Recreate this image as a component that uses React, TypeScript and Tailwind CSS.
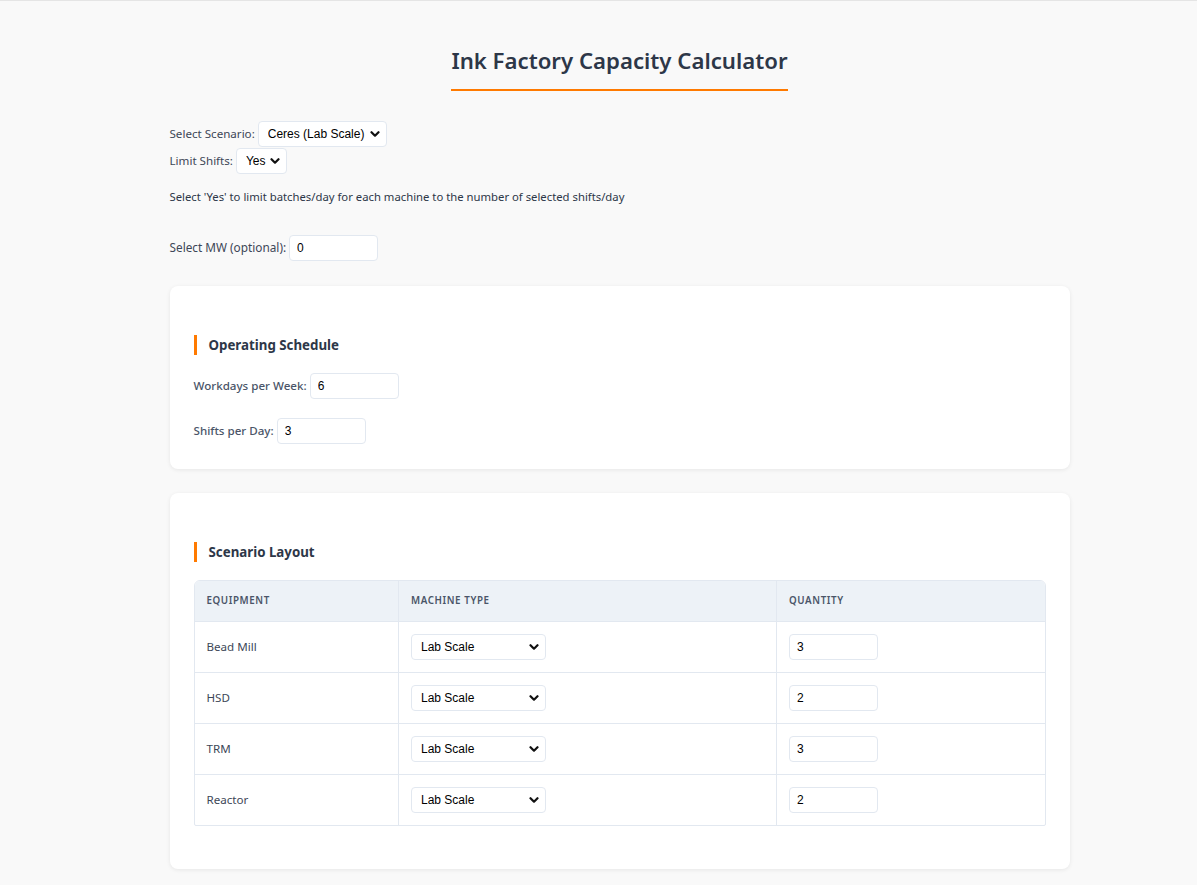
import React from "react";

const Chevron = () => (
  <svg width="10" height="10" viewBox="0 0 10 10" className="pointer-events-none absolute right-[7px] top-1/2 -translate-y-1/2">
    <path d="M1.5 3.2 L5 6.7 L8.5 3.2" fill="none" stroke="#111" strokeWidth="2.2" strokeLinecap="round" strokeLinejoin="round" />
  </svg>
);

function Select({ value, w }: { value: string; w: string }) {
  return (
    <span className={`relative flex ${w}`}>
      <select
        defaultValue={value}
        className="appearance-none w-full h-[26px] rounded-[4px] border border-[#e2e8f0] bg-white pl-[9px] pr-5 text-[12px] text-black font-['Liberation_Sans',Arial,sans-serif]"
      >
        <option>{value}</option>
      </select>
      <Chevron />
    </span>
  );
}

function Input({ value }: { value: string }) {
  return (
    <input
      defaultValue={value}
      className="w-[89px] h-[26px] rounded-[4px] border border-[#e2e8f0] bg-white px-[7px] text-[12px] text-black font-['Liberation_Sans',Arial,sans-serif]"
    />
  );
}

function CardHeading({ children }: { children: React.ReactNode }) {
  return (
    <h2 className="border-l-[3px] border-[#ff7a00] pl-3 text-[13.3px] leading-[20px] font-bold text-[#2d3748]">
      {children}
    </h2>
  );
}

const rows = [
  { name: "Bead Mill", qty: "3" },
  { name: "HSD", qty: "2" },
  { name: "TRM", qty: "3" },
  { name: "Reactor", qty: "2" },
];

export default function App() {
  return (
    <div className="min-h-screen bg-[#f9f9f9] border-t border-[#e5e5e5] font-['Noto_Sans',sans-serif] text-[#4a5568]">
      <div className="w-[900px] mx-auto translate-x-[21px] pt-[44px] pb-10">
        <div className="text-center">
          <h1 className="inline-block border-b-2 border-[#ff7a00] pb-[12px] text-[22.2px] leading-[32px] font-semibold text-[#2d3748]">
            Ink Factory Capacity Calculator
          </h1>
        </div>

        <div className="mt-[30px] flex flex-col gap-[1px] text-[11.6px] text-[#3d4757]">
          <div className="flex items-center gap-[3px]">
            <span>Select Scenario:</span>
            <Select value="Ceres (Lab Scale)" w="w-[129px]" />
          </div>
          <div className="flex items-center gap-[3px]">
            <span>Limit Shifts:</span>
            <Select value="Yes" w="w-[51px]" />
          </div>
        </div>
        <p className="mt-[15px] text-[11.3px] leading-[16px] text-[#2d3748]">
          Select 'Yes' to limit batches/day for each machine to the number of selected shifts/day
        </p>
        <div className="mt-[30px] flex items-center gap-[3px] text-[11.8px] text-[#3d4757]">
          <span>Select MW (optional):</span>
          <Input value="0" />
        </div>

        <div className="mt-[25px] rounded-lg bg-white p-6 pb-[25px] shadow-[0_1px_4px_rgba(0,0,0,0.08)]">
          <div className="mt-[25px]">
            <CardHeading>Operating Schedule</CardHeading>
          </div>
          <div className="mt-[18px] flex flex-col gap-[19px] text-[11.6px] font-medium">
            <div className="flex items-center gap-[3px]">
              <span>Workdays per Week:</span>
              <Input value="6" />
            </div>
            <div className="flex items-center gap-[3px]">
              <span>Shifts per Day:</span>
              <Input value="3" />
            </div>
          </div>
        </div>

        <div className="mt-6 rounded-lg bg-white p-6 pb-[43px] shadow-[0_1px_4px_rgba(0,0,0,0.08)]">
          <div className="mt-[25px]">
            <CardHeading>Scenario Layout</CardHeading>
          </div>
          <div className="mt-[18px] overflow-hidden rounded-t-[6px] rounded-b-[2px] border border-[#e2e8f0]">
            <table className="w-full border-collapse text-left">
              <thead>
                <tr className="bg-[#edf2f7]">
                  <th className="w-[204px] px-3 py-3 text-[9.8px] leading-[16px] font-semibold uppercase tracking-[0.06em] text-[#4a5568] border-r border-[#e2e8f0]">Equipment</th>
                  <th className="w-[378px] px-3 py-3 text-[9.8px] leading-[16px] font-semibold uppercase tracking-[0.06em] text-[#4a5568] border-r border-[#e2e8f0]">Machine Type</th>
                  <th className="px-3 py-3 text-[9.8px] leading-[16px] font-semibold uppercase tracking-[0.06em] text-[#4a5568]">Quantity</th>
                </tr>
              </thead>
              <tbody>
                {rows.map((r) => (
                  <tr key={r.name} className="border-t border-[#e2e8f0]">
                    <td className="px-3 py-3 text-[11.6px] leading-[26px] text-[#3d4757] border-r border-[#e2e8f0]">{r.name}</td>
                    <td className="px-3 py-3 border-r border-[#e2e8f0]">
                      <div className="flex">
                        <Select value="Lab Scale" w="w-[135px]" />
                      </div>
                    </td>
                    <td className="px-3 py-3">
                      <div className="flex">
                        <Input value={r.qty} />
                      </div>
                    </td>
                  </tr>
                ))}
              </tbody>
            </table>
          </div>
        </div>
      </div>
    </div>
  );
}
